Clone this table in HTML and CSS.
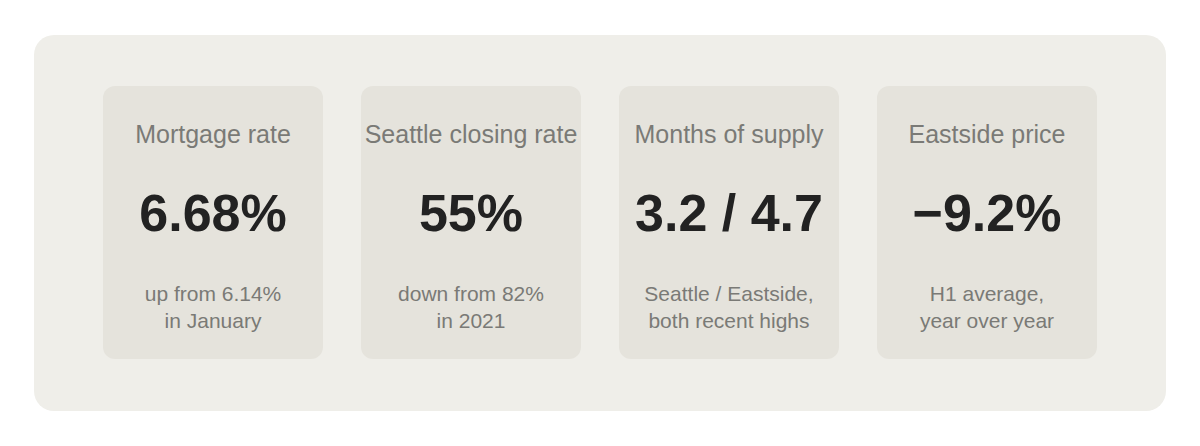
FILE: index.html
```html
<!DOCTYPE html>
<html lang="en">
<head>
<meta charset="utf-8">
<title>Market stats</title>
<link rel="stylesheet" href="styles.css">
</head>
<body>
<div class="page">
  <section class="panel">
    <div class="card">
      <div class="card-title">Mortgage rate</div>
      <div class="card-value">6.68%</div>
      <div class="card-note">up from 6.14%<br>in January</div>
    </div>
    <div class="card">
      <div class="card-title">Seattle closing rate</div>
      <div class="card-value">55%</div>
      <div class="card-note">down from 82%<br>in 2021</div>
    </div>
    <div class="card">
      <div class="card-title">Months of supply</div>
      <div class="card-value">3.2 / 4.7</div>
      <div class="card-note">Seattle / Eastside,<br>both recent highs</div>
    </div>
    <div class="card">
      <div class="card-title">Eastside price</div>
      <div class="card-value">&minus;9.2%</div>
      <div class="card-note">H1 average,<br>year over year</div>
    </div>
  </section>
</div>
</body>
</html>
```
FILE: styles.css
```css
html, body {
  margin: 0;
  padding: 0;
  background: #ffffff;
}

body {
  font-family: "Liberation Sans", Arial, sans-serif;
}

.page {
  padding: 35px 34px;
}

.panel {
  background: #efeee9;
  border-radius: 20px;
  padding: 51px 69px 52px;
  display: grid;
  grid-template-columns: repeat(4, 220px);
  column-gap: 38px;
  justify-content: center;
}

.card {
  background: #e5e3dc;
  border-radius: 12px;
  height: 273px;
  box-sizing: border-box;
  padding-top: 33px;
  display: flex;
  flex-direction: column;
  align-items: center;
  text-align: center;
}

.card-title {
  font-size: 25px;
  line-height: 30px;
  color: #7a7a76;
  white-space: nowrap;
}

.card-value {
  margin-top: 36px;
  font-size: 52px;
  line-height: 57px;
  font-weight: 700;
  color: #222222;
  white-space: nowrap;
}

.card-note {
  margin-top: 38px;
  font-size: 21px;
  line-height: 27px;
  color: #7a7a76;
}
```
